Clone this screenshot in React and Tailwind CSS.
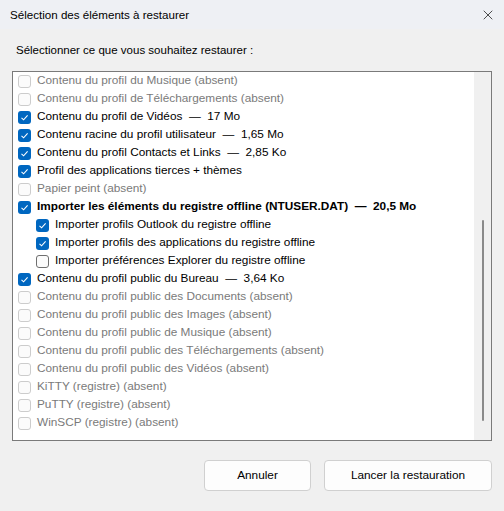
import { X } from "lucide-react";

const items = [
  { label: "Contenu du profil du Musique (absent)", disabled: true },
  { label: "Contenu du profil de Téléchargements (absent)", disabled: true },
  { label: "Contenu du profil de Vidéos  —  17 Mo", checked: true },
  { label: "Contenu racine du profil utilisateur  —  1,65 Mo", checked: true },
  { label: "Contenu du profil Contacts et Links  —  2,85 Ko", checked: true },
  { label: "Profil des applications tierces + thèmes", checked: true },
  { label: "Papier peint (absent)", disabled: true },
  { label: "Importer les éléments du registre offline (NTUSER.DAT)  —  20,5 Mo", checked: true, bold: true },
  { label: "Importer profils Outlook du registre offline", checked: true, child: true },
  { label: "Importer profils des applications du registre offline", checked: true, child: true },
  { label: "Importer préférences Explorer du registre offline", child: true },
  { label: "Contenu du profil public du Bureau  —  3,64 Ko", checked: true },
  { label: "Contenu du profil public des Documents (absent)", disabled: true },
  { label: "Contenu du profil public des Images (absent)", disabled: true },
  { label: "Contenu du profil public de Musique (absent)", disabled: true },
  { label: "Contenu du profil public des Téléchargements (absent)", disabled: true },
  { label: "Contenu du profil public des Vidéos (absent)", disabled: true },
  { label: "KiTTY (registre) (absent)", disabled: true },
  { label: "PuTTY (registre) (absent)", disabled: true },
  { label: "WinSCP (registre) (absent)", disabled: true },
];

function Box({ checked, disabled }) {
  if (checked) {
    return (
      <span className="w-[13px] h-[13px] rounded-[3px] bg-[#0067c0] flex items-center justify-center shrink-0">
        <svg width="9" height="9" viewBox="0 0 9 9" fill="none">
          <path d="M1.5 4.8 L3.6 6.8 L7.6 2.4" stroke="white" strokeWidth="1.1" />
        </svg>
      </span>
    );
  }
  return (
    <span
      className={
        disabled
          ? "w-[13px] h-[13px] rounded-[3px] border border-[#cccccc] bg-[#fbfbfb] shrink-0"
          : "w-[13px] h-[13px] rounded-[3px] border border-[#6f6f6f] bg-[#fbfbfb] shrink-0"
      }
    />
  );
}

export default function App() {
  return (
    <div className="w-[504px] h-[511px] bg-[#f0f0f0] flex flex-col text-[11.8px] text-black font-['Segoe_UI','Liberation_Sans',sans-serif]">
      {/* barre de titre */}
      <div className="h-[29px] bg-[#eef0f4] flex items-center justify-between pl-[10px] pr-[8px] shrink-0">
        <span className="text-[11.6px]">Sélection des éléments à restaurer</span>
        <X size={16} strokeWidth={1.2} className="text-[#222]" />
      </div>

      <div className="flex flex-col px-[12px] flex-1">
        <div className="h-[42px] flex items-center pl-[4px] pt-[1px] text-[11.5px]">
          Sélectionner ce que vous souhaitez restaurer :
        </div>

        <div className="h-[370px] border border-[#7a7a7a] bg-white flex">
          <div className="flex-1 flex flex-col">
            {items.map((it, i) => (
              <div
                key={i}
                className={
                  it.child
                    ? "h-[18px] flex items-center gap-[6px] pl-[23px]"
                    : "h-[18px] flex items-center gap-[6px] pl-[5px]"
                }
              >
                <Box checked={it.checked} disabled={it.disabled} />
                <span
                  className={
                    "whitespace-pre " +
                    (it.disabled ? "text-[#7a7a7a]" : "text-black") +
                    (it.bold ? " font-bold" : "")
                  }
                >
                  {it.label}
                </span>
              </div>
            ))}
          </div>
          {/* barre de défilement fine */}
          <div className="w-[17px] bg-[#f0f0f0] flex flex-col items-center pt-[148px] pb-[19px]">
            <div className="w-[2px] flex-1 bg-[#8a8a8a] rounded-full" />
          </div>
        </div>

        <div className="flex justify-end gap-[13px] pt-[19px]">
          <button className="w-[107px] h-[31px] bg-[#fdfdfd] border border-[#d0d0d0] rounded-[4px]">
            Annuler
          </button>
          <button className="w-[168px] h-[31px] bg-[#fdfdfd] border border-[#d0d0d0] rounded-[4px]">
            Lancer la restauration
          </button>
        </div>
      </div>
    </div>
  );
}
